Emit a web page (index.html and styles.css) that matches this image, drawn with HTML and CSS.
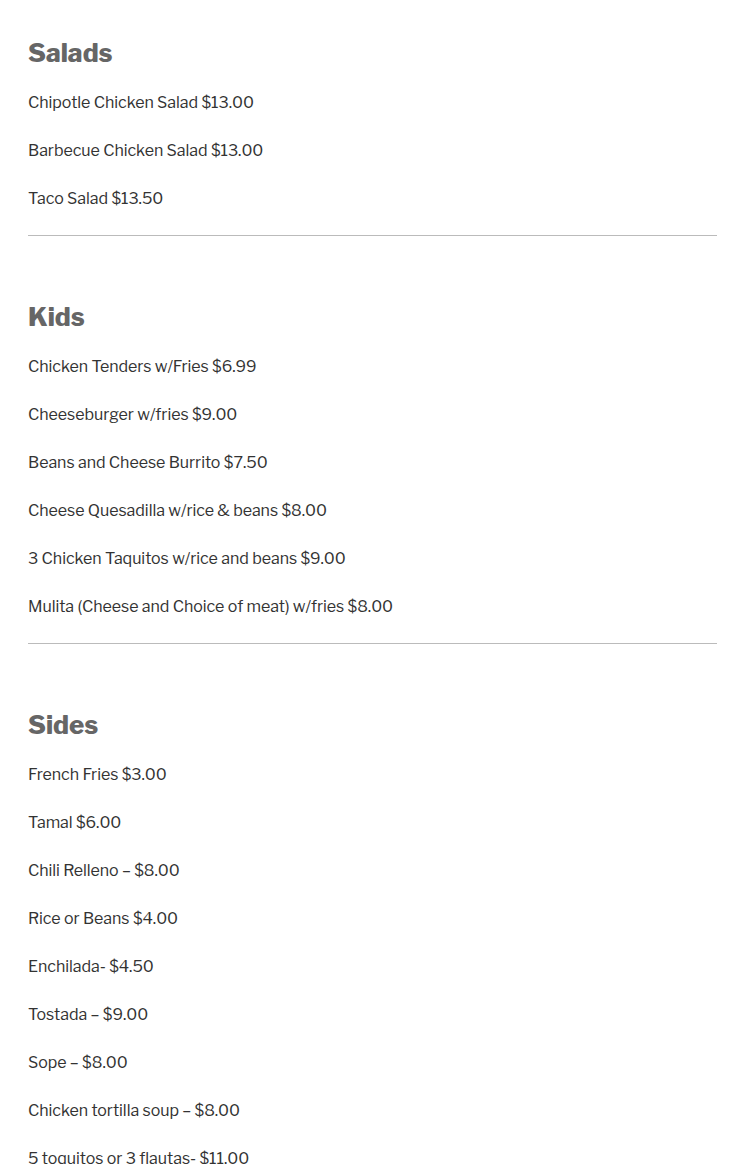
FILE: index.html
```html
<!DOCTYPE html>
<html lang="en">
<head>
<meta charset="utf-8">
<title>Menu</title>
<link rel="stylesheet" href="styles.css">
</head>
<body>
<main class="menu">
  <section class="group">
    <h2 class="group-title">Salads</h2>
    <p class="item">Chipotle Chicken Salad $13.00</p>
    <p class="item">Barbecue Chicken Salad $13.00</p>
    <p class="item">Taco Salad $13.50</p>
  </section>
  <hr class="rule">
  <section class="group">
    <h2 class="group-title">Kids</h2>
    <p class="item">Chicken Tenders w/Fries $6.99</p>
    <p class="item">Cheeseburger w/fries $9.00</p>
    <p class="item">Beans and Cheese Burrito $7.50</p>
    <p class="item">Cheese Quesadilla w/rice &amp; beans $8.00</p>
    <p class="item">3 Chicken Taquitos w/rice and beans $9.00</p>
    <p class="item">Mulita (Cheese and Choice of meat) w/fries $8.00</p>
  </section>
  <hr class="rule">
  <section class="group">
    <h2 class="group-title">Sides</h2>
    <p class="item">French Fries $3.00</p>
    <p class="item">Tamal $6.00</p>
    <p class="item">Chili Relleno – $8.00</p>
    <p class="item">Rice or Beans $4.00</p>
    <p class="item">Enchilada- $4.50</p>
    <p class="item">Tostada – $9.00</p>
    <p class="item">Sope – $8.00</p>
    <p class="item">Chicken tortilla soup – $8.00</p>
    <p class="item">5 toquitos or 3 flautas- $11.00</p>
  </section>
</main>
</body>
</html>
```
FILE: styles.css
```css
html, body {
  margin: 0;
  padding: 0;
  background: #fff;
}
body {
  font-family: "Libre Franklin", "Inter", "Liberation Sans", sans-serif;
  color: #333;
}
.menu {
  padding: 37px 28px 0 28px;
}
.group-title {
  margin: 0 0 22px 0;
  font-size: 26px;
  line-height: 32px;
  font-weight: 800;
  color: #666;
}
.item {
  margin: 0 0 24px 0;
  font-size: 16px;
  line-height: 24px;
  letter-spacing: -0.05px;
  color: #333;
}
.rule {
  border: 0;
  border-top: 1px solid #bbb;
  margin: 1px 0 65px 0;
  height: 0;
}
```
